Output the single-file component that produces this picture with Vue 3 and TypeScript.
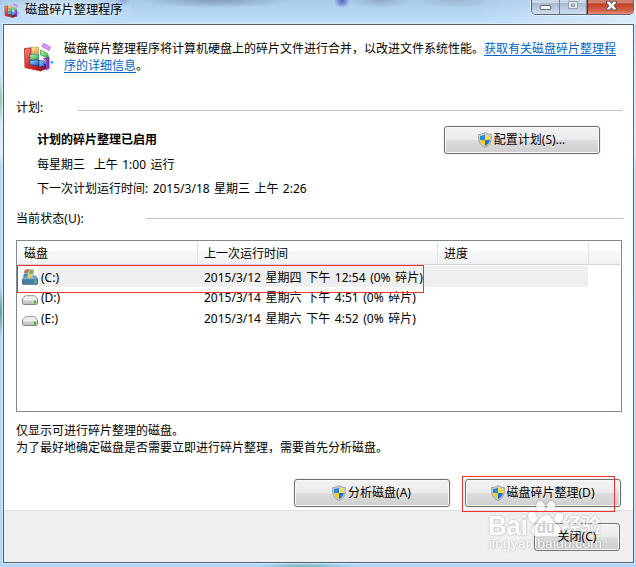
<script setup lang="ts">
interface Drive {
  name: string
  lastRun: string
  system: boolean
}

const drives: Drive[] = [
  { name: '(C:)', lastRun: '2015/3/12 星期四 下午 12:54 (0% 碎片)', system: true },
  { name: '(D:)', lastRun: '2015/3/14 星期六 下午 4:51 (0% 碎片)', system: false },
  { name: '(E:)', lastRun: '2015/3/14 星期六 下午 4:52 (0% 碎片)', system: false },
]
</script>

<template>
  <div class="window">
    <svg class="defs" aria-hidden="true">
      <defs>
        <linearGradient id="red" x1="0" y1="0" x2="1" y2="1">
          <stop offset="0" stop-color="#f59082" /><stop offset=".45" stop-color="#e03630" /><stop offset="1" stop-color="#a01418" />
        </linearGradient>
        <linearGradient id="gold" x1="0" y1="0" x2="1" y2="1">
          <stop offset="0" stop-color="#fff0b0" /><stop offset="1" stop-color="#e59a2a" />
        </linearGradient>
        <linearGradient id="green" x1="0" y1="0" x2="1" y2="1">
          <stop offset="0" stop-color="#c8f7b6" /><stop offset="1" stop-color="#27a838" />
        </linearGradient>
        <linearGradient id="blue" x1="0" y1="0" x2="1" y2="1">
          <stop offset="0" stop-color="#9fe0ff" /><stop offset="1" stop-color="#1c52c8" />
        </linearGradient>
        <linearGradient id="purple" x1="0" y1="0" x2="1" y2="0">
          <stop offset="0" stop-color="#c77bf0" /><stop offset="1" stop-color="#7d1fc0" />
        </linearGradient>
        <linearGradient id="metal" x1="0" y1="0" x2="0" y2="1">
          <stop offset="0" stop-color="#f4f4f4" /><stop offset="1" stop-color="#b9bbbf" />
        </linearGradient>
        <radialGradient id="haze"><stop offset="0" stop-color="#777" stop-opacity=".5" /><stop offset="1" stop-color="#777" stop-opacity="0" /></radialGradient>
        <symbol id="blocks" viewBox="0 0 32 32">
          <ellipse cx="21" cy="26" rx="10" ry="4.500" fill="url(#haze)" />
          <path d="M1.500 6.500 8 5.800V20l10 3.500V29L2 25.500z" fill="url(#red)" stroke="#a81c1c" stroke-width=".8" />
          <path d="M18 23.500l7-3V26l-7 3z" fill="#8f1220" />
          <path d="M8.500 5.500l7-.5v6l-7 .5z" fill="url(#gold)" stroke="#b87d21" stroke-width=".5" />
          <path d="M7 12.500l8.500-.5v5.500L7 18z" fill="url(#green)" stroke="#1d6b78" stroke-width=".7" />
          <path d="M7 18.500l8.500-.5v6L7 22.500z" fill="url(#blue)" stroke="#193d94" stroke-width=".7" />
          <path d="M16 18.500l5.500.5v5L16 25z" fill="url(#blue)" stroke="#193d94" stroke-width=".7" />
          <path d="M17.500 8l7 3.500 1.500 5-8.500-3.500z" fill="url(#green)" stroke="#1c8a34" stroke-width=".6" />
          <path d="M20.500 16.500l5.500-1V26l-3 1.500V19z" fill="url(#purple)" stroke="#691c9e" stroke-width=".7" />
          <path d="M20.500 1.500l7 3.500-1.500 3.500-7-4z" fill="#d99af2" stroke="#b45fd8" stroke-width=".8" />
          <path d="M27.500 19h2.500v2.500h-2.500z" fill="#27b0ee" />
        </symbol>
        <symbol id="shield" viewBox="0 0 14 16">
          <path d="M7 .5C5 2 3 2.500.7 2.500.3 9 1.500 13 7 15.500 12.500 13 13.700 9 13.300 2.500 11 2.500 9 2 7 .5z" fill="#d0d3d5" stroke="#8d9194" stroke-width=".8" />
          <path d="M7 2.300V8H2.100C1.900 6.700 1.900 5 2 3.800 4 3.800 5.500 3.300 7 2.300z" fill="#2389e0" />
          <path d="M7 2.300V8h4.900c.2-1.300.2-3 .1-4.200C10 3.800 8.500 3.300 7 2.300z" fill="#fbdc45" />
          <path d="M2.100 8H7v6C4.200 12.600 2.600 11 2.100 8z" fill="#f8cc22" />
          <path d="M11.900 8H7v6c2.800-1.400 4.400-3 4.900-6z" fill="#1a72d2" />
        </symbol>
        <symbol id="disk" viewBox="0 0 16 10">
          <path d="M3.500.8h9L15.500 4v4.500l-1 1h-13l-1-1V4z" fill="url(#metal)" stroke="#77797e" stroke-width=".9" />
          <path d="M3.800 1.300h8.500L14.700 4H1.300z" fill="#eeeeef" />
          <path d="M1 4.600h14" stroke="#fff" stroke-width=".8" />
          <path d="M12 5.500h2v3h-2z" fill="#3fb51e" />
        </symbol>
        <symbol id="sysdisk" viewBox="0 0 16 17">
          <path d="M3.500 8h10L16 11.500v4l-1 1H1l-1-1v-4z" fill="#477da3" stroke="#356180" stroke-width=".6" />
          <path d="M3.500 8.500h9.500l2 2.700H1z" fill="#84aecb" />
          <path d="M2 3c2-2 4-2.500 10-1.500v8H4z" fill="#8bbbd3" opacity=".75" />
          <path d="M3 2.200C4.500 1 5.500 1 7 1.600L6 5C4.500 4.400 3.300 4.500 2 5.500z" fill="#e5622c" />
          <path d="M7.700 1.900c1.500.7 2.700.6 4.200-.4L11 5c-1.500.9-2.700 1-4.200.3z" fill="#73b842" />
          <path d="M1.800 6.200c1.300-.9 2.400-.9 3.900-.3l-.8 3c-1.400-.5-2.600-.4-3.900.4z" fill="#3a86cd" />
          <path d="M6.500 6.200c1.500.6 2.700.5 4.200-.3l-.9 3.100c-1.400.9-2.700.9-4.100.3z" fill="#f6ce45" />
          <path d="M12.500 12.500h1.800v2.500h-1.800z" fill="#5ee238" />
        </symbol>
      </defs>
    </svg>

    <header class="titlebar">
      <svg class="app-icon"><use href="#blocks" /></svg>
      <span class="title">磁盘碎片整理程序</span>
      <div class="controls">
        <div class="control minimize"><svg viewBox="0 0 28 14"><rect x="8.500" y="5.500" width="11" height="4" rx=".5" fill="#fff" stroke="#595d6b" /></svg></div>
        <div class="control maximize"><svg viewBox="0 0 26 14"><path d="M8.500 1.500h9v7h-9zM11.500 4v2.500h3V4z" fill="#dfe6ec" fill-rule="evenodd" stroke="#98a2ac" /></svg></div>
        <div class="control close"><svg viewBox="0 0 46 14"><path d="M19 .5h3.500L24 3 25.500.5H29V2.500L26.500 5 29 8v1.500h-3.500L24 7.200 22.500 9.500H19V8l2.500-3L19 2.500z" fill="#fff" stroke="#574849" /></svg></div>
      </div>
    </header>

    <main class="client">
      <section class="intro">
        <svg class="intro-icon"><use href="#blocks" /></svg>
        <p>磁盘碎片整理程序将计算机硬盘上的碎片文件进行合并，以改进文件系统性能。<a>获取有关磁盘碎片整理程<br />序的详细信息</a>。</p>
      </section>

      <div class="group plan"><span>计划:</span><i></i></div>
      <section class="schedule">
        <div class="facts">
          <strong>计划的碎片整理已启用</strong>
          <span>每星期三&nbsp; 上午 1:00 运行</span>
          <span>下一次计划运行时间: 2015/3/18 星期三 上午 2:26</span>
        </div>
        <button class="wide"><svg class="shield"><use href="#shield" /></svg>配置计划(S)...</button>
      </section>

      <div class="group status"><span>当前状态(U):</span><i></i></div>
      <section class="list">
        <div class="row head"><span>磁盘</span><span>上一次运行时间</span><span>进度</span><span></span></div>
        <div v-for="d in drives" :key="d.name" class="row" :class="{ selected: d.system }">
          <span class="drive">
            <svg :class="d.system ? 'sysdisk' : 'disk'"><use :href="d.system ? '#sysdisk' : '#disk'" /></svg>{{ d.name }}
          </span>
          <span class="last">{{ d.lastRun }}</span>
        </div>
        <div class="mark mark-row"></div>
      </section>

      <p class="note">仅显示可进行碎片整理的磁盘。<br />为了最好地确定磁盘是否需要立即进行碎片整理，需要首先分析磁盘。</p>

      <div class="actions">
        <button class="wide"><svg class="shield"><use href="#shield" /></svg>分析磁盘(A)</button>
        <div class="target">
          <button class="wide"><svg class="shield"><use href="#shield" /></svg>磁盘碎片整理(D)</button>
          <div class="mark mark-button"></div>
        </div>
      </div>

      <footer class="footer">
        <button class="narrow"><span>关闭(C)</span></button>
        <svg class="watermark" viewBox="0 0 120 56">
          <g class="wm">
            <text x="0" y="38" class="latin" textLength="40" lengthAdjust="spacingAndGlyphs">Bai</text>
            <ellipse cx="44.500" cy="20" rx="4.300" ry="5.500" transform="rotate(-18 44.500 20)" />
            <ellipse cx="52.500" cy="10" rx="4.300" ry="6" transform="rotate(-6 52.500 10)" />
            <ellipse cx="63" cy="10" rx="4.300" ry="6" transform="rotate(8 63 10)" />
            <ellipse cx="71" cy="21" rx="4.300" ry="5.500" transform="rotate(18 71 21)" />
            <path d="M58 18c5 0 6 5 10 9 4 3 6 5 4 9-2 5-7 3-14 3s-12 2-14-3c-2-4 1-7 5-10 3-3 4-8 9-8z" />
            <text x="74" y="36" class="han" textLength="39" lengthAdjust="spacingAndGlyphs">经验</text>
            <text x="1" y="51" class="url" textLength="113" lengthAdjust="spacingAndGlyphs">jingyan.baidu.com</text>
          </g>
          <text x="49" y="36" class="du" textLength="18" lengthAdjust="spacingAndGlyphs">du</text>
        </svg>
      </footer>
    </main>
  </div>
</template>

<style>
body { margin: 0; overflow: hidden; }
</style>

<style scoped>
* { box-sizing: border-box; }
.window {
  width: 636px; height: 567px; padding: 0 2px 4px 3px; overflow: hidden;
  font: 12px/17px "Noto Sans", "Noto Sans CJK SC", sans-serif; color: #000;
  background:
    radial-gradient(ellipse 50px 5px at 305px 567px, #70b8b5, transparent),
    radial-gradient(ellipse 4px 25px at 0 100px, #8cc4ac, transparent),
    radial-gradient(ellipse 4px 25px at 0 312px, #4f9885, transparent),
    linear-gradient(180deg, #b9d7f1 0, #bddaf5 24px, #c9e4fa 60px, #e0effb 155px, #b6d8f8 165px, #b3d7fa 567px);
}
.defs { position: absolute; width: 0; height: 0; }
.titlebar {
  height: 24px; display: flex; align-items: flex-start; margin: 0 -2px 0 -3px; padding-left: 4px;
  background:
    radial-gradient(ellipse 8px 7px at 123px 0, rgba(125, 143, 195, .6), transparent),
    radial-gradient(ellipse 8px 7px at 342px 1px, #5361bd, transparent),
    radial-gradient(ellipse 75px 8px at 215px 0, #819eb8, transparent),
    radial-gradient(ellipse 30px 8px at 380px 0, #8fabc7, transparent),
    radial-gradient(ellipse 36px 8px at 455px 0, #9bb7d0, transparent),
    radial-gradient(ellipse 70px 15px at 65px 9px, rgba(235, 246, 255, .8), transparent),
    linear-gradient(90deg, transparent 480px, rgba(225, 239, 251, .8) 636px),
    linear-gradient(#a8c9e9, #b9d9f7 65%, #c4e0f9);
}
.app-icon { width: 16px; height: 16px; margin-top: 3px; }
.title { margin: 1px 0 0 5px; line-height: 18px; font-size: 12.200px; }
.controls { display: flex; width: 103px; height: 15px; margin-left: auto; margin-right: 2px; border: 1px solid #5b6672; border-top: 0; border-radius: 0 0 5px 5px; overflow: hidden; box-shadow: 0 0 1px 1px rgba(255,255,255,.55); }
.control { height: 14px; background: linear-gradient(#c8d8e8 0 20%, #a9bccf 25%, #cddff0); border-right: 1px solid #728396; }
.control svg { display: block; width: 100%; height: 14px; }
.minimize { width: 28px; }
.maximize { width: 27px; }
.close { flex: 1; border: 0; background: linear-gradient(#d0806f 0 20%, #bd3f27 28%, #d9664a 80%, #e9917a 100%); border-left: 1px solid #67272a; }
.close svg { padding-top: 0; transform: translateY(.5px); }
.client { width: 631px; height: 539px; border: 1px solid #53616e; background: #fff; display: flex; flex-direction: column; box-shadow: 0 0 0 1px rgba(228, 243, 255, .6); }
.intro { height: 74px; display: flex; padding: 15px 0 0 19px; flex: none; }
.intro-icon { width: 32px; height: 32px; margin-top: 2px; flex: none; }
p { margin: 0; }
.intro p { margin-left: 9px; white-space: nowrap; }
a { color: #0066cc; text-decoration: underline; text-underline-offset: 2px; }
.group { display: flex; height: 17px; align-items: center; margin: 0 10px 0 12px; flex: none; }
.group i { height: 1px; flex: 1; background: #c3c3c3; margin-top: 5px; }
.plan span { width: 62px; }
.status { margin-top: 1px; }
.status span { width: 130px; letter-spacing: .08px; }
.status i { margin-top: 0; }
.schedule { height: 93px; flex: none; display: flex; padding: 10px 33px 0 33px; justify-content: space-between; }
.facts { display: flex; flex-direction: column; line-height: 24.500px; padding-top: 2px; white-space: nowrap; word-spacing: 1.300px; }
.facts strong { font-weight: 700; }
button { position: relative; font: inherit; color: #000; padding: 0; height: 28px; display: flex; align-items: center; justify-content: center; border: 1px solid #707070; border-radius: 3px; background: linear-gradient(#f2f2f2 0, #ebebeb 48%, #dddddd 50%, #cfcfcf); box-shadow: inset 0 0 0 1px #fafafa, 0 0 0 1px #f1f1f1; flex: none; }
.wide { width: 156px; padding: 0 1px 1px 0; }
.narrow { width: 86px; position: static; }
.narrow span { position: relative; z-index: 3; padding-bottom: 1px; }
.shield { width: 14px; height: 16px; margin-right: 2px; }
.list { position: relative; width: 606px; height: 172px; margin: 13px 0 0 12px; border: 1px solid #828790; flex: none; }
.row { display: grid; grid-template-columns: 181px 240px 151px 1fr; height: 21px; line-height: 21px; align-items: center; white-space: nowrap; word-spacing: 1.500px; }
.row.head { height: 24px; margin: 0 1px; background: linear-gradient(#fff 0 42%, #f6f7f9 44%, #f1f2f4); border-bottom: 1px solid #d5d5d5; grid-template-columns: 180px 240px 151px 1fr; }
.head span { height: 22px; line-height: 24px; padding-left: 6px; border-right: 1px solid #e1e2e4; }
.head span:last-child { border: 0; }
.row.selected { background: linear-gradient(#efefef, #efefef) 21px 1px / 550px 21px no-repeat; height: 22px; line-height: 22px; }
.selected .last { padding-top: 2px; }
.drive { display: flex; align-items: center; padding-left: 5px; }
.selected .drive { padding-top: 1px; }
.drive svg { width: 16px; margin-right: 3px; }
.disk { height: 10px; margin-top: 4px; }
.sysdisk { height: 17px; margin-top: -2px; }
.last { padding-left: 6px; }
.mark { position: absolute; border: 1px solid #f23030; pointer-events: none; }
.mark-row { left: 0; top: 24px; width: 407px; height: 28px; }
.note { margin: 10px 0 0 12px; height: 38px; flex: none; }
.actions { display: flex; justify-content: flex-end; gap: 15px; margin: 19px 12px 0 0; height: 31px; flex: none; }
.target { position: relative; height: 28px; }
.mark-button { left: -3px; top: -3px; width: 153px; height: 36px; z-index: 2; }
.footer { position: relative; flex: 1; border-top: 1px solid #dfdfdf; background: #f0f0f0; display: flex; justify-content: flex-end; padding: 12px 13px 0 0; }
.watermark { position: absolute; left: 484px; top: -14px; width: 120px; height: 56px; overflow: visible; }
.wm { fill: #fff; opacity: .78; filter: drop-shadow(0 0 1px rgba(90, 90, 90, .55)); }
.latin, .du { font: 700 27px "Liberation Sans", sans-serif; }
.du { font-size: 17px; fill: #cfcfcf; }
.han { font: 700 20px "Noto Sans CJK SC", sans-serif; }
.url { font: 12px "Liberation Sans", sans-serif; }
</style>
